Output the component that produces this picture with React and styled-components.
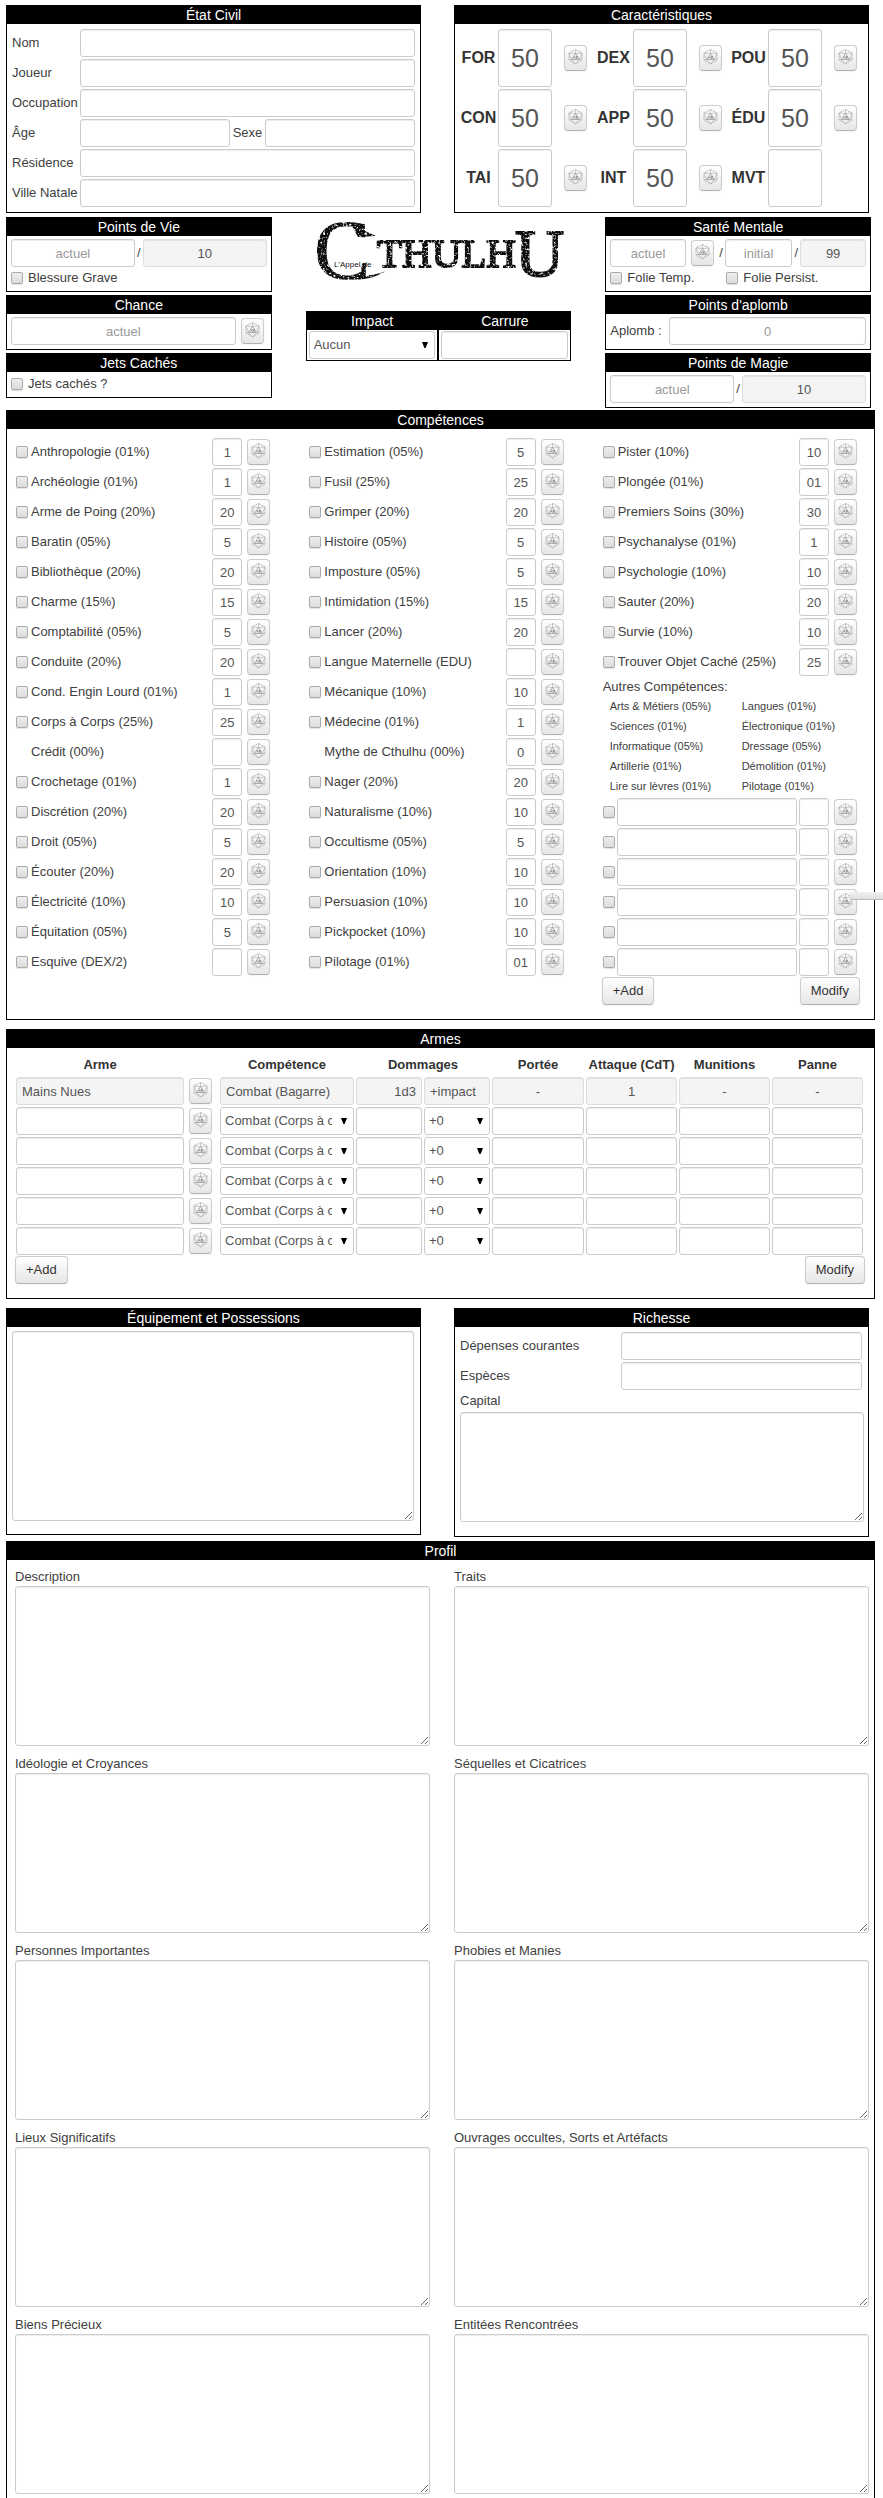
import React, { useId } from 'react';
import styled, { createGlobalStyle, css } from 'styled-components';

const GlobalStyle = createGlobalStyle`
  *, *::before, *::after { box-sizing: border-box; }
  body {
    margin: 0;
    background: #fff;
    color: #404040;
    font-family: "Liberation Sans", Arial, Helvetica, sans-serif;
    font-size: 13px;
    line-height: 18px;
  }
  input, select, textarea, button { font: inherit; margin: 0; }
`;

/* ---------- page structure ---------- */

const Sheet = styled.main`
  padding: 5px 8px 0 6px;
`;

const TwoColumns = styled.div`
  display: grid;
  grid-template-columns: 1fr 1fr;
  align-items: start;
  gap: 33px;
  padding-right: 6px;
  margin-bottom: 4px;
`;

const ThreeColumns = styled.div`
  display: grid;
  grid-template-columns: repeat(3, minmax(0, 1fr));
  align-items: start;
  gap: 34px;
  padding-right: 4px;
  margin-bottom: 2px;
`;

const Stack = styled.div`
  display: flex;
  flex-direction: column;
  gap: 3px;
`;

const PanelBox = styled.section`
  position: relative;
  border: 1px solid #000;
  ${(p) => p.$open && 'border-bottom: 0;'}
  ${(p) => p.$spaced && 'margin-bottom: 9px;'}
`;

const PanelTitle = styled.h2`
  margin: 0;
  height: 18px;
  background: #000;
  color: #fff;
  font-size: 14px;
  font-weight: 400;
  line-height: 18px;
  text-align: center;
`;

function Panel({ title, children, ...rest }) {
  return (
    <PanelBox {...rest}>
      <PanelTitle>{title}</PanelTitle>
      {children}
    </PanelBox>
  );
}

/* ---------- controls ---------- */

const fieldLook = css`
  border: 1px solid #ccc;
  border-radius: 3px;
  background: #fff;
  box-shadow: inset 0 1px 1px rgba(0, 0, 0, 0.075);
  color: #555;
  outline: 0;
`;

const Input = styled.input`
  ${fieldLook}
  display: block;
  min-width: 0;
  width: ${(p) => p.$width || '100%'};
  flex: ${(p) => (p.$width ? 'none' : p.$grow || 1)};
  height: ${(p) => (p.$big ? 58 : 28)}px;
  padding: 0 5px;
  font-size: ${(p) => (p.$big ? 25 : 13)}px;
  text-align: ${(p) => p.$align || 'left'};
  &::placeholder { color: #999; opacity: 1; }
  &:read-only { background: #f4f4f4; border-color: #ddd; }
`;

const TextArea = styled.textarea`
  ${fieldLook}
  display: block;
  width: 100%;
  height: ${(p) => p.$height}px;
  padding: 4px 5px;
  resize: both;
`;

const Checkbox = styled.input.attrs({ type: 'checkbox' })`
  appearance: none;
  flex: none;
  width: 12px;
  height: 12px;
  border: 1px solid #aaa;
  border-radius: 2px;
  background: linear-gradient(#eee, #dcdcdc);
  box-shadow: 0 1px 1px rgba(0, 0, 0, 0.12);
`;

const buttonLook = css`
  border: 1px solid #ccc;
  border-bottom-color: #b3b3b3;
  border-radius: 4px;
  background: linear-gradient(#fff, #e6e6e6);
  box-shadow: 0 1px 2px rgba(0, 0, 0, 0.05);
  color: #333;
`;

const RollBox = styled.button`
  ${buttonLook}
  display: flex;
  flex: none;
  align-items: flex-start;
  justify-content: center;
  width: 23px;
  height: 26px;
  padding: 3px 0 0;
  margin: ${(p) => p.$margin || '0'};
`;

const TextButton = styled.button`
  ${buttonLook}
  height: 28px;
  padding: 0 10px;
`;

const SelectWrap = styled.div`
  position: relative;
  min-width: 0;
  svg { position: absolute; right: 7px; top: 11px; pointer-events: none; }
`;

const SelectBox = styled.select`
  ${fieldLook}
  box-shadow: none;
  appearance: none;
  display: block;
  width: 100%;
  height: 28px;
  padding: 0 21px 0 4px;
`;

function Select({ options, label }) {
  return (
    <SelectWrap>
      <SelectBox aria-label={label}>
        {options.map((o) => <option key={o}>{o}</option>)}
      </SelectBox>
      <svg width="6" height="6" viewBox="0 0 6 6" aria-hidden="true">
        <path d="M0 0H6L3.6 6H2.4Z" fill="#000" />
      </svg>
    </SelectWrap>
  );
}

function Roll({ label, margin }) {
  return (
    <RollBox type="button" aria-label={`Lancer ${label}`} $margin={margin}>
      <svg width="15" height="16" viewBox="0 0 15 16" fill="none" aria-hidden="true">
        <path d="M7.5 .5L14 4V11L7.5 15L1 11V4Z" stroke="#aaa" strokeWidth=".8" strokeDasharray="2.2 .7" />
        <path d="M7.5 .5V4.5M1 4L7.5 4.5L14 4M1 4L3.5 10.5M14 4L11.5 10.5M1 11L3.5 10.5M14 11L11.5 10.5M3.5 10.5L7.5 15L11.5 10.5" stroke="#b4b4b4" strokeWidth=".7" />
        <path d="M7.5 4.5L3.5 10.5H11.5Z" stroke="#999" strokeWidth=".8" />
        <path d="M5.8 7.6L7 9.3M7 7.6L5.8 9.3M8 7.6H9.2V9.3H8Z" stroke="#777" strokeWidth=".7" />
      </svg>
    </RollBox>
  );
}

/* ---------- État civil ---------- */

const FieldList = styled.div`
  display: flex;
  flex-direction: column;
  gap: 2px;
  padding: 5px;
`;

const FieldRow = styled.div`
  display: flex;
  align-items: center;
`;

const FieldLabel = styled.label`
  flex: none;
  width: ${(p) => p.$width || 68}px;
  text-align: ${(p) => p.$align || 'left'};
  white-space: nowrap;
`;

function Field({ label }) {
  const id = useId();
  return (
    <FieldRow>
      <FieldLabel htmlFor={id}>{label}</FieldLabel>
      <Input id={id} />
    </FieldRow>
  );
}

function CivilStatus() {
  return (
    <Panel title="État Civil">
      <FieldList>
        <Field label="Nom" />
        <Field label="Joueur" />
        <Field label="Occupation" />
        <FieldRow>
          <FieldLabel htmlFor="age">Âge</FieldLabel>
          <Input id="age" />
          <FieldLabel htmlFor="sexe" $width={35} $align="center">Sexe</FieldLabel>
          <Input id="sexe" />
        </FieldRow>
        <Field label="Résidence" />
        <Field label="Ville Natale" />
      </FieldList>
    </Panel>
  );
}

/* ---------- Caractéristiques ---------- */

const StatGrid = styled.div`
  display: grid;
  grid-template-columns: repeat(3, auto);
  justify-content: space-between;
  row-gap: 2px;
  padding: 5px 11px 5px 4px;
`;

const Stat = styled.div`
  display: flex;
  align-items: center;
  width: 128px;
`;

const StatLabel = styled.label`
  width: 39px;
  color: #333;
  font-size: 16px;
  font-weight: 700;
  text-align: center;
`;

const stats = ['FOR', 'DEX', 'POU', 'CON', 'APP', 'ÉDU', 'TAI', 'INT', 'MVT'];

function Characteristics() {
  return (
    <Panel title="Caractéristiques">
      <StatGrid>
        {stats.map((s) => (
          <Stat key={s}>
            <StatLabel htmlFor={s}>{s}</StatLabel>
            <Input id={s} $big $width="54px" $align="center" defaultValue={s === 'MVT' ? '' : '50'} />
            {s !== 'MVT' && <Roll label={s} margin="0 0 0 12px" />}
          </Stat>
        ))}
      </StatGrid>
    </Panel>
  );
}

/* ---------- points, santé, chance ---------- */

const PanelBody = styled.div`
  padding: 3px 4px 4px;
`;

const Slash = styled.span`
  flex: none;
  width: 8px;
  text-align: center;
`;

const Checks = styled.div`
  display: flex;
  margin-top: ${(p) => (p.$below ? 2 : 0)}px;
`;

const CheckLabel = styled.label`
  display: flex;
  align-items: center;
  gap: 5px;
  min-width: 116px;
  height: 18px;
  white-space: nowrap;
`;

const ImpactRow = styled.div`
  display: grid;
  grid-template-columns: 1fr 1fr;
`;

const ImpactBody = styled.div`
  padding: 1px 2px;
`;

const LogoBox = styled.div`
  display: flex;
  align-items: center;
  justify-content: center;
  height: 94px;
`;

const LogoArt = styled.svg`
  flex: none;
  overflow: visible;
`;

function Logo() {
  return (
    <LogoBox>
      <LogoArt width="256" height="100" viewBox="0 -8 256 100" role="img" aria-label="L'Appel de Cthulhu">
        <defs>
          <filter id="worn" x="0" y="0" width="100%" height="100%">
            <feTurbulence type="fractalNoise" baseFrequency="0.45" numOctaves="2" seed="4" result="noise" />
            <feColorMatrix in="noise" type="matrix" values="0 0 0 0 0  0 0 0 0 0  0 0 0 0 0  0 -4 0 0 3.1" result="mask" />
            <feComposite in="SourceGraphic" in2="mask" operator="in" />
          </filter>
        </defs>
        <g filter="url(#worn)" fill="#111" stroke="#111" fontFamily='"Liberation Serif", "Times New Roman", serif'>
          <text x="4" y="57" fontSize="84" strokeWidth="1">C</text>
          <text x="67" y="45" fontSize="41" strokeWidth="2">THULH</text>
          <text x="205" y="54" fontSize="68" strokeWidth="2">U</text>
          <path d="M42 4L50 2L55 9L66 14L48 15Z" strokeWidth="0" />
          <path d="M38 57C52 59 64 56 76 49C66 53 54 55 40 54Z" strokeWidth="0" />
        </g>
        <text x="24" y="45" fontSize="8" fill="#111" fontFamily='"Liberation Sans", Arial, sans-serif'>L'Appel de</text>
      </LogoArt>
    </LogoBox>
  );
}

function LeftPoints() {
  return (
    <Stack>
      <Panel title="Points de Vie">
        <PanelBody>
          <FieldRow>
            <Input aria-label="Points de vie actuels" placeholder="actuel" $align="center" />
            <Slash>/</Slash>
            <Input aria-label="Points de vie maximum" readOnly defaultValue="10" $align="center" />
          </FieldRow>
          <Checks $below>
            <CheckLabel><Checkbox />Blessure Grave</CheckLabel>
          </Checks>
        </PanelBody>
      </Panel>
      <Panel title="Chance">
        <PanelBody>
          <FieldRow>
            <Input aria-label="Chance" placeholder="actuel" $align="center" />
            <Roll label="Chance" margin="0 3px 0 5px" />
          </FieldRow>
        </PanelBody>
      </Panel>
      <Panel title="Jets Cachés">
        <PanelBody>
          <Checks>
            <CheckLabel><Checkbox />Jets cachés ?</CheckLabel>
          </Checks>
        </PanelBody>
      </Panel>
    </Stack>
  );
}

function MiddlePoints() {
  return (
    <div>
      <Logo />
      <ImpactRow>
        <Panel title="Impact">
          <ImpactBody><Select label="Impact" options={['Aucun', '+1d4', '+1d6']} /></ImpactBody>
        </Panel>
        <Panel title="Carrure">
          <ImpactBody><Input aria-label="Carrure" /></ImpactBody>
        </Panel>
      </ImpactRow>
    </div>
  );
}

function RightPoints() {
  return (
    <Stack>
      <Panel title="Santé Mentale">
        <PanelBody>
          <FieldRow>
            <Input aria-label="Santé mentale actuelle" placeholder="actuel" $grow={77} $align="center" />
            <Roll label="Santé Mentale" margin="0 3px 0 5px" />
            <Slash>/</Slash>
            <Input aria-label="Santé mentale initiale" placeholder="initial" $grow={67} $align="center" />
            <Slash>/</Slash>
            <Input aria-label="Santé mentale maximum" readOnly defaultValue="99" $grow={65} $align="center" />
          </FieldRow>
          <Checks $below>
            <CheckLabel><Checkbox />Folie Temp.</CheckLabel>
            <CheckLabel><Checkbox />Folie Persist.</CheckLabel>
          </Checks>
        </PanelBody>
      </Panel>
      <Panel title="Points d'aplomb">
        <PanelBody>
          <FieldRow>
            <FieldLabel htmlFor="aplomb" $width={59}>Aplomb :</FieldLabel>
            <Input id="aplomb" placeholder="0" $align="center" />
          </FieldRow>
        </PanelBody>
      </Panel>
      <Panel title="Points de Magie">
        <PanelBody>
          <FieldRow>
            <Input aria-label="Points de magie actuels" placeholder="actuel" $align="center" />
            <Slash>/</Slash>
            <Input aria-label="Points de magie maximum" readOnly defaultValue="10" $align="center" />
          </FieldRow>
        </PanelBody>
      </Panel>
    </Stack>
  );
}

/* ---------- Compétences ---------- */

const SkillColumns = styled.div`
  display: grid;
  grid-template-columns: repeat(3, minmax(0, 1fr));
  gap: 39px;
  padding: 9px 17px 14px 9px;
`;

const SkillList = styled.div`
  display: flex;
  flex-direction: column;
  gap: 2px;
`;

const SkillRow = styled.div`
  display: flex;
  align-items: center;
  height: 28px;
`;

const SkillName = styled.label`
  flex: 1;
  padding-left: ${(p) => (p.$unchecked ? 15 : 3)}px;
  white-space: nowrap;
`;

const OtherSkills = styled.div`
  height: 118px;
`;

const OtherTitle = styled.div`
  height: 18px;
`;

const OtherGrid = styled.div`
  display: grid;
  grid-template-columns: 132px 1fr;
  padding-left: 7px;
  font-size: 11px;
  line-height: 20px;
  white-space: nowrap;
`;

const CustomRow = styled(SkillRow)`
  gap: 2px;
`;

const Actions = styled.div`
  display: flex;
  justify-content: space-between;
  margin: ${(p) => p.$margin};
`;

const SideHandle = styled.div`
  position: absolute;
  top: 481px;
  right: -9px;
  width: 33px;
  height: 8px;
  border-bottom: 1px solid #bbb;
  border-radius: 2px 0 0 2px;
  background: linear-gradient(#f0f0f0, #e0e0e0);
`;

const skillsLeft = [
  ['Anthropologie (01%)', '1'], ['Archéologie (01%)', '1'], ['Arme de Poing (20%)', '20'],
  ['Baratin (05%)', '5'], ['Bibliothèque (20%)', '20'], ['Charme (15%)', '15'],
  ['Comptabilité (05%)', '5'], ['Conduite (20%)', '20'], ['Cond. Engin Lourd (01%)', '1'],
  ['Corps à Corps (25%)', '25'], ['Crédit (00%)', '', true], ['Crochetage (01%)', '1'],
  ['Discrétion (20%)', '20'], ['Droit (05%)', '5'], ['Écouter (20%)', '20'],
  ['Électricité (10%)', '10'], ['Équitation (05%)', '5'], ['Esquive (DEX/2)', ''],
];

const skillsMiddle = [
  ['Estimation (05%)', '5'], ['Fusil (25%)', '25'], ['Grimper (20%)', '20'],
  ['Histoire (05%)', '5'], ['Imposture (05%)', '5'], ['Intimidation (15%)', '15'],
  ['Lancer (20%)', '20'], ['Langue Maternelle (EDU)', ''], ['Mécanique (10%)', '10'],
  ['Médecine (01%)', '1'], ['Mythe de Cthulhu (00%)', '0', true], ['Nager (20%)', '20'],
  ['Naturalisme (10%)', '10'], ['Occultisme (05%)', '5'], ['Orientation (10%)', '10'],
  ['Persuasion (10%)', '10'], ['Pickpocket (10%)', '10'], ['Pilotage (01%)', '01'],
];

const skillsRight = [
  ['Pister (10%)', '10'], ['Plongée (01%)', '01'], ['Premiers Soins (30%)', '30'],
  ['Psychanalyse (01%)', '1'], ['Psychologie (10%)', '10'], ['Sauter (20%)', '20'],
  ['Survie (10%)', '10'], ['Trouver Objet Caché (25%)', '25'],
];

const otherSkills = [
  'Arts & Métiers (05%)', 'Langues (01%)', 'Sciences (01%)', 'Électronique (01%)',
  'Informatique (05%)', 'Dressage (05%)', 'Artillerie (01%)', 'Démolition (01%)',
  'Lire sur lèvres (01%)', 'Pilotage (01%)',
];

function Skill({ name, value, unchecked }) {
  const id = useId();
  return (
    <SkillRow>
      {!unchecked && <Checkbox aria-label={`${name} cochée`} />}
      <SkillName htmlFor={id} $unchecked={unchecked}>{name}</SkillName>
      <Input id={id} $width="30px" $align="center" defaultValue={value} />
      <Roll label={name} margin="0 0 0 5px" />
    </SkillRow>
  );
}

const renderSkills = (list) => list.map(([name, value, unchecked]) => (
  <Skill key={name} name={name} value={value} unchecked={unchecked} />
));

function Skills() {
  return (
    <Panel title="Compétences" $spaced>
      <SkillColumns>
        <SkillList>{renderSkills(skillsLeft)}</SkillList>
        <SkillList>{renderSkills(skillsMiddle)}</SkillList>
        <div>
          <SkillList>
            {renderSkills(skillsRight)}
            <OtherSkills>
              <OtherTitle>Autres Compétences:</OtherTitle>
              <OtherGrid>
                {otherSkills.map((s) => <span key={s}>{s}</span>)}
              </OtherGrid>
            </OtherSkills>
            {[1, 2, 3, 4, 5, 6].map((n) => (
              <CustomRow key={n}>
                <Checkbox aria-label={`Autre compétence ${n} cochée`} />
                <Input aria-label={`Nom de l'autre compétence ${n}`} />
                <Input aria-label={`Valeur de l'autre compétence ${n}`} $width="30px" $align="center" />
                <Roll label={`autre compétence ${n}`} margin="0 0 0 3px" />
              </CustomRow>
            ))}
          </SkillList>
          <Actions $margin="1px -3px 0 -1px">
            <TextButton type="button">+Add</TextButton>
            <TextButton type="button">Modify</TextButton>
          </Actions>
        </div>
      </SkillColumns>
      <SideHandle />
    </Panel>
  );
}

/* ---------- Armes ---------- */

const WeaponBody = styled.div`
  padding: 0 9px 14px 7px;
`;

const WeaponTable = styled.table`
  width: 100%;
  table-layout: fixed;
  border-collapse: separate;
  border-spacing: 2px;
  tbody td { padding: 0; height: 28px; }
  thead td { padding: 0; }
  th {
    height: 25px;
    padding: 5px 0 0;
    color: #333;
    font-size: 13px;
    font-weight: 700;
    white-space: nowrap;
  }
`;

const Col = styled.col`
  width: ${(p) => p.$width}px;
`;

const weaponColumns = [168, 32, 134, 66, 66, 92, 91, 91, 91];
const weaponDetails = ['Portée', 'Attaque', 'Munitions', 'Panne'];

function Weapons() {
  return (
    <Panel title="Armes" $spaced>
      <WeaponBody>
        <WeaponTable>
          <colgroup>{weaponColumns.map((w, i) => <Col key={i} $width={w} />)}</colgroup>
          <thead>
            <tr>
              <th scope="col">Arme</th>
              <td />
              <th scope="col">Compétence</th>
              <th scope="col" colSpan={2}>Dommages</th>
              <th scope="col">Portée</th>
              <th scope="col">Attaque (CdT)</th>
              <th scope="col">Munitions</th>
              <th scope="col">Panne</th>
            </tr>
          </thead>
          <tbody>
            <tr>
              <td><Input aria-label="Arme" readOnly defaultValue="Mains Nues" /></td>
              <td><Roll label="Mains Nues" margin="0 0 0 3px" /></td>
              <td><Input aria-label="Compétence" readOnly defaultValue="Combat (Bagarre)" /></td>
              <td><Input aria-label="Dommages" readOnly defaultValue="1d3" $align="right" /></td>
              <td><Input aria-label="Bonus" readOnly defaultValue="+impact" /></td>
              <td><Input aria-label="Portée" readOnly defaultValue="-" $align="center" /></td>
              <td><Input aria-label="Attaque" readOnly defaultValue="1" $align="center" /></td>
              <td><Input aria-label="Munitions" readOnly defaultValue="-" $align="center" /></td>
              <td><Input aria-label="Panne" readOnly defaultValue="-" $align="center" /></td>
            </tr>
            {[1, 2, 3, 4, 5].map((n) => (
              <tr key={n}>
                <td><Input aria-label={`Arme ${n}`} /></td>
                <td><Roll label={`arme ${n}`} margin="0 0 0 3px" /></td>
                <td><Select label={`Compétence de l'arme ${n}`} options={['Combat (Corps à corps)', 'Fusil', 'Arme de Poing']} /></td>
                <td><Input aria-label={`Dommages de l'arme ${n}`} $align="right" /></td>
                <td><Select label={`Bonus de l'arme ${n}`} options={['+0', '+impact']} /></td>
                {weaponDetails.map((d) => (
                  <td key={d}><Input aria-label={`${d} de l'arme ${n}`} $align="center" /></td>
                ))}
              </tr>
            ))}
          </tbody>
        </WeaponTable>
        <Actions $margin="-1px 0 0 1px">
          <TextButton type="button">+Add</TextButton>
          <TextButton type="button">Modify</TextButton>
        </Actions>
      </WeaponBody>
    </Panel>
  );
}

/* ---------- Équipement et richesse ---------- */

const EquipmentBody = styled.div`
  padding: 4px 6px 13px 5px;
`;

const WealthBody = styled.div`
  padding: 5px 4px 14px 5px;
`;

const WealthFields = styled.div`
  display: flex;
  flex-direction: column;
  gap: 2px;
  padding-right: 2px;
`;

const WealthRow = styled(FieldRow)`
  justify-content: space-between;
`;

const BlockLabel = styled.label`
  display: block;
  height: ${(p) => p.$height}px;
  line-height: ${(p) => p.$height}px;
`;

function Wealth() {
  return (
    <Panel title="Richesse">
      <WealthBody>
        <WealthFields>
          <WealthRow>
            <label htmlFor="depenses">Dépenses courantes</label>
            <Input id="depenses" $width="60%" />
          </WealthRow>
          <WealthRow>
            <label htmlFor="especes">Espèces</label>
            <Input id="especes" $width="60%" />
          </WealthRow>
        </WealthFields>
        <BlockLabel htmlFor="capital" $height={22}>Capital</BlockLabel>
        <TextArea id="capital" $height={110} />
      </WealthBody>
    </Panel>
  );
}

/* ---------- Profil ---------- */

const ProfileGrid = styled.div`
  display: grid;
  grid-template-columns: 1fr 1fr;
  gap: 9px 24px;
  padding: 8px 5px 4px 8px;
`;

const profile = [
  'Description', 'Traits', 'Idéologie et Croyances', 'Séquelles et Cicatrices',
  'Personnes Importantes', 'Phobies et Manies', 'Lieux Significatifs',
  'Ouvrages occultes, Sorts et Artéfacts', 'Biens Précieux', 'Entitées Rencontrées',
];

function Note({ label }) {
  const id = useId();
  return (
    <div>
      <BlockLabel htmlFor={id} $height={18}>{label}</BlockLabel>
      <TextArea id={id} $height={160} />
    </div>
  );
}

export default function App() {
  return (
    <Sheet>
      <GlobalStyle />
      <TwoColumns>
        <CivilStatus />
        <Characteristics />
      </TwoColumns>
      <ThreeColumns>
        <LeftPoints />
        <MiddlePoints />
        <RightPoints />
      </ThreeColumns>
      <Skills />
      <Weapons />
      <TwoColumns>
        <Panel title="Équipement et Possessions">
          <EquipmentBody>
            <TextArea aria-label="Équipement et Possessions" $height={190} />
          </EquipmentBody>
        </Panel>
        <Wealth />
      </TwoColumns>
      <Panel title="Profil" $open>
        <ProfileGrid>
          {profile.map((p) => <Note key={p} label={p} />)}
        </ProfileGrid>
      </Panel>
    </Sheet>
  );
}
